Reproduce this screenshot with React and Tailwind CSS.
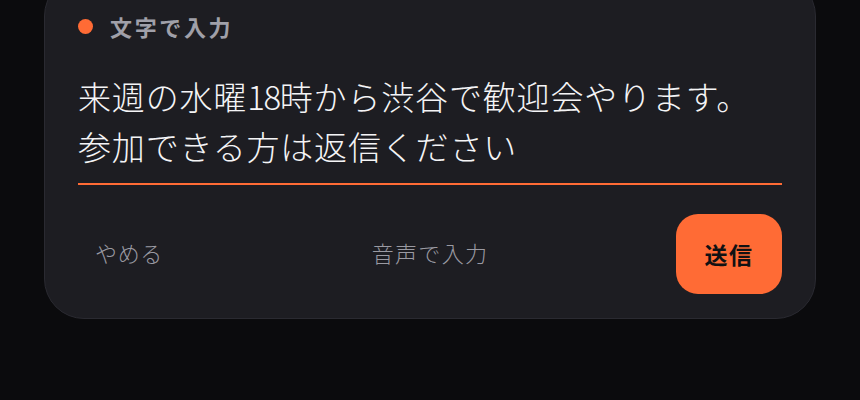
import React, { useState } from "react";

const jp = { fontFamily: '"Noto Sans CJK JP", "Noto Sans", sans-serif' };

function ComposerCard() {
  const [text] = useState("来週の水曜18時から渋谷で歓迎会やります。\n参加できる方は返信ください");
  const lines = text.split("\n");

  // digits are a bit narrower than the kanji pitch in the design
  const renderLine = (l) =>
    l.split(/(\d+)/).map((part, i) =>
      /^\d+$/.test(part) ? (
        <span key={i} className="tracking-[-0.04em]">{part}</span>
      ) : (
        part
      )
    );

  return (
    <div className="mx-[44px] -mt-[24px] rounded-[40px] border border-[#2a2a31] bg-[#1d1d22] px-[33px] pt-[35px] pb-[24px]">
      <div className="flex h-[28px] items-center gap-[17px]">
        <span className="h-[15px] w-[15px] rounded-full bg-[#ff6b35]" />
        <span className="text-[22px] font-bold leading-none tracking-[0.12em] text-[#a0a0a9]">文字で入力</span>
      </div>

      <div className="mt-[31px] border-b-2 border-[#ff6b35] pb-[12px]">
        <p className="text-[33px] font-light leading-[50px] tracking-[0.025em] text-[#f4f4f6]">
          {lines.map((l, i) => (
            <span key={i} className="block whitespace-nowrap">{renderLine(l)}</span>
          ))}
        </p>
      </div>

      <div className="mt-[29px] grid grid-cols-[1fr_auto_1fr] items-center">
        <button className="justify-self-start px-[17px] pb-[12px] pt-[8px] text-[22px] font-light tracking-[0.03em] text-[#9a9aa2]">やめる</button>
        <button className="pb-[4px] text-[22px] font-light tracking-[0.06em] text-[#9a9aa2]">音声で入力</button>
        <button className="h-[80px] w-[106px] justify-self-end rounded-[22px] bg-[#ff6b35] text-[23px] font-bold tracking-[0.06em] text-[#111113]">送信</button>
      </div>
    </div>
  );
}

export default function App() {
  return (
    <div className="h-[400px] w-[860px] overflow-hidden bg-[#0b0b0d]" style={jp}>
      <ComposerCard />
    </div>
  );
}
